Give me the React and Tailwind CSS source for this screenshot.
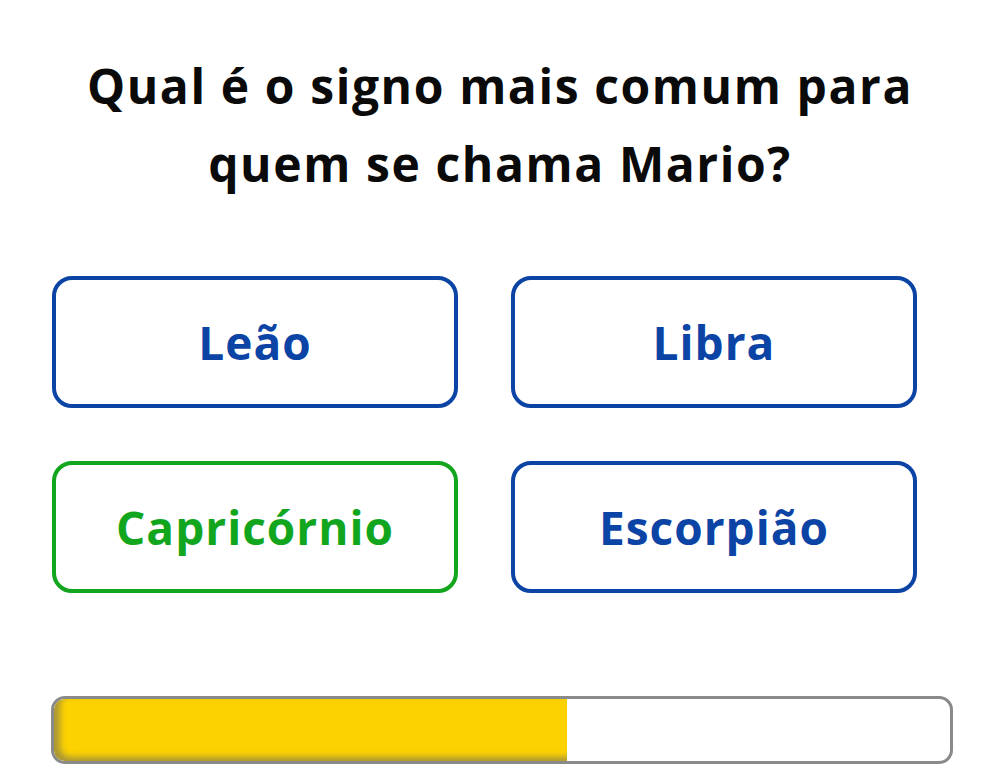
import React from "react";

const options = [
  { label: "Leão", color: "blue" },
  { label: "Libra", color: "blue" },
  { label: "Capricórnio", color: "green" },
  { label: "Escorpião", color: "blue" },
];

export default function App() {
  return (
    <div className="w-[1000px] h-[774px] bg-white overflow-hidden" style={{ fontFamily: "'Open Sans', Lato, sans-serif" }}>
      <h1 className="pt-[47px] text-center text-[48px] leading-[78px] font-bold tracking-[1.6px] text-[#0a0a0a]">
        Qual é o signo mais comum para
        <br />
        quem se chama Mario?
      </h1>
      <div className="mt-[73px] ml-[52px] grid grid-cols-[406px_406px] gap-x-[53px] gap-y-[53px]">
        {options.map((o) =>
          o.color === "green" ? (
            <div
              key={o.label}
              className="h-[132px] rounded-[20px] border-[4px] border-[#12a51e] flex items-center justify-center text-[46px] font-bold tracking-[1px] text-[#12a51e]"
            >
              {o.label}
            </div>
          ) : (
            <div
              key={o.label}
              className="h-[132px] rounded-[20px] border-[4px] border-[#0b44a5] flex items-center justify-center text-[46px] font-bold tracking-[1px] text-[#0b44a5]"
            >
              {o.label}
            </div>
          )
        )}
      </div>
      <div className="mt-[103px] ml-[51px] w-[902px] h-[68px] rounded-[14px] border-[3px] border-[#8a8a8a] overflow-hidden flex">
        <div className="w-[513px] h-full bg-[#fcd200] rounded-l-[10px] shadow-[inset_6px_-4px_6px_rgba(100,100,100,0.55)]" />
      </div>
    </div>
  );
}
